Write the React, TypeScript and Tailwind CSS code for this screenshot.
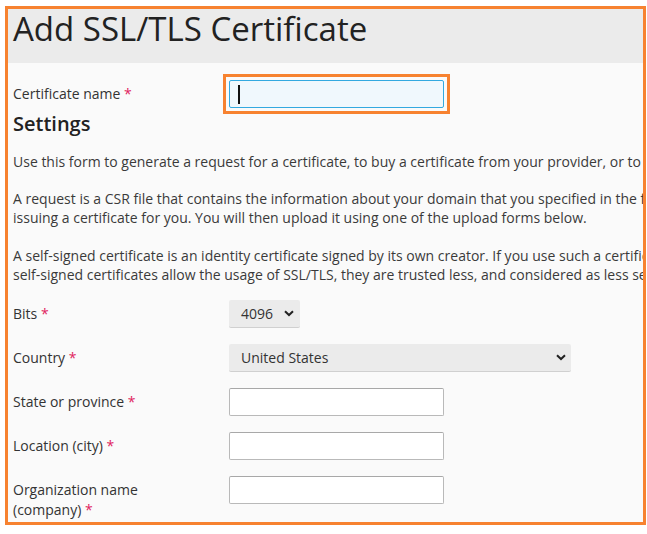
import React from "react";

const Req = () => <span className="text-[#e0245e]"> *</span>;

function Chevron() {
  return (
    <svg width="10" height="7" viewBox="0 0 10 7" className="block">
      <path d="M1 1.2 L5 5 L9 1.2" fill="none" stroke="#222" strokeWidth="2" />
    </svg>
  );
}

function Row({ label, children }: { label: React.ReactNode; children: React.ReactNode }) {
  return (
    <div className="flex items-start">
      <div className="w-[216px] shrink-0 pt-[4px] leading-[20px] text-[14px] text-[#333] pr-[8px]">{label}</div>
      <div>{children}</div>
    </div>
  );
}

function TextInput() {
  return (
    <div className="w-[215px] h-[28px] bg-white border border-[#b9b9b9] border-t-[#a8a8a8] rounded-[2px]" />
  );
}

export default function App() {
  return (
    <div className="w-[647px] h-[534px] bg-white" style={{ fontFamily: '"Open Sans", "Noto Sans", sans-serif' }}>
      <div className="absolute left-[5px] top-[6px] w-[641px] h-[519px] border-[3px] border-[#f78230] bg-[#fafafa] overflow-hidden">
        <div className="h-[54px] bg-[#ebebeb] pl-[5px] flex items-center">
          <h1 className="text-[33px] leading-[40px] text-[#222] whitespace-nowrap -mt-[14px]">Add SSL/TLS Certificate</h1>
        </div>
        <div className="pl-[5px] w-[1000px]">
          <div className="mt-[11px] flex items-center">
            <div className="w-[210px] shrink-0 text-[14px] text-[#333] leading-[20px]">
              Certificate name<Req />
            </div>
            <div className="border-[3px] border-[#f78230] p-[3px]">
              <div className="w-[215px] h-[28px] bg-[#f0f8fd] border border-[#33a9e0] rounded-[2px] flex items-center pl-[8px]">
                <span className="block w-[1.5px] h-[19px] bg-[#111]" />
              </div>
            </div>
          </div>
          <h2 className="text-[20px] leading-[24px] font-semibold text-[#222] mt-[-2px]">Settings</h2>
          <div className="text-[14px] leading-[19px] text-[#3a3a3a] whitespace-nowrap">
            <p className="mt-[16px]">
              Use this form to generate a request for a certificate, to buy a certificate from your provider, or to generate a self-signed certificate.
            </p>
            <p className="mt-[18px]">
              A request is a CSR file that contains the information about your domain that you specified in the form. You can submit this request to a certification authority for
              <br />
              issuing a certificate for you. You will then upload it using one of the upload forms below.
            </p>
            <p className="mt-[19px]">
              A self-signed certificate is an identity certificate signed by its own creator. If you use such a certificate, its authenticity cannot be verified. Although
              <br />
              self-signed certificates allow the usage of SSL/TLS, they are trusted less, and considered as less secure.
            </p>
          </div>
          <div className="mt-[16px] flex flex-col gap-[16px]">
            <Row label={<>Bits<Req /></>}>
              <div className="w-[71px] h-[28px] bg-[#ebebeb] border-b border-[#d0d0d0] rounded-[2px] flex items-center justify-between pl-[12px] pr-[6px] text-[14px] text-[#333]">
                <span>4096</span>
                <Chevron />
              </div>
            </Row>
            <Row label={<>Country<Req /></>}>
              <div className="w-[342px] h-[28px] bg-[#ebebeb] border-b border-[#d0d0d0] rounded-[2px] flex items-center justify-between pl-[12px] pr-[5px] text-[14px] text-[#333]">
                <span>United States</span>
                <Chevron />
              </div>
            </Row>
            <Row label={<>State or province<Req /></>}>
              <TextInput />
            </Row>
            <Row label={<>Location (city)<Req /></>}>
              <TextInput />
            </Row>
            <Row label={<>Organization name<br />(company)<Req /></>}>
              <TextInput />
            </Row>
          </div>
        </div>
      </div>
    </div>
  );
}
